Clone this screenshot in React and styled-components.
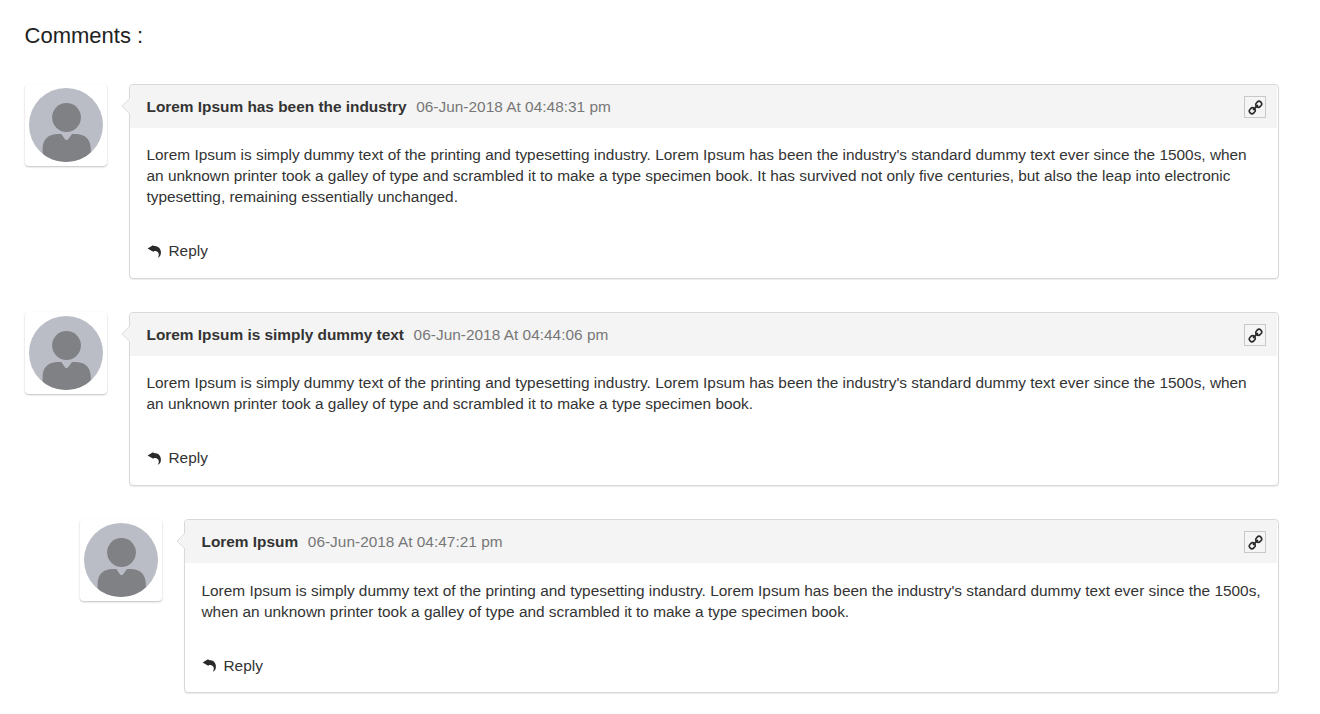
import React from "react";
import styled, { createGlobalStyle } from "styled-components";

const GlobalStyle = createGlobalStyle`
  *, *::before, *::after { box-sizing: border-box; }
  body {
    margin: 0;
    background: #fff;
    color: #333;
    font: 15.4px/21px "Liberation Sans", Arial, sans-serif;
  }
`;

const Page = styled.main`
  padding: 20px 41px 0 24.6px;
`;

const Heading = styled.h2`
  margin: 0 0 33px;
  font-size: 22px;
  line-height: 31px;
  font-weight: 400;
  color: #222;
`;

const CommentRow = styled.article`
  display: flex;
  align-items: flex-start;
  gap: 22px;
  margin-bottom: 33.15px;
  padding-left: ${({ $nested }) => ($nested ? "55.4px" : "0.4px")};
`;

const AvatarFrame = styled.div`
  flex: none;
  width: 82px;
  height: 82px;
  padding: 4px;
  border-radius: 4px;
  background: #fff;
  box-shadow: 0 1px 2px rgba(0, 0, 0, 0.25);

  svg { display: block; }
`;

const Card = styled.section`
  flex: 1;
  min-width: 0;
  border: 1px solid #d8d8d8;
  border-radius: 4px;
  background: #fff;
  box-shadow: 0 1px 1px rgba(0, 0, 0, 0.08);
`;

const CardHeader = styled.header`
  position: relative;
  display: flex;
  align-items: center;
  height: 43px;
  margin-right: 1px;
  padding: 0 11px 0 16.5px;
  border-radius: 3px 3px 0 0;
  background: #f4f4f4;
`;

const Pointer = styled.svg`
  position: absolute;
  left: -9px;
  top: 13px;
`;

const Title = styled.strong`
  margin-right: 9.7px;
`;

const Timestamp = styled.time`
  color: #777;
  letter-spacing: 0.02px;
`;

const LinkButton = styled.button`
  display: grid;
  place-items: center;
  width: 22px;
  height: 22px;
  margin: 1px 0 0 auto;
  padding: 0;
  border: 1px solid #c8c8c8;
  background: #f5f5f5;
`;

const CardBody = styled.div`
  padding: 16.25px 16.5px 16.75px;
`;

const Message = styled.p`
  margin: 0 0 33px;
`;

const ReplyButton = styled.button`
  display: flex;
  align-items: center;
  gap: 6px;
  padding: 0 0 0 1px;
  border: 0;
  background: none;
  color: #333;
  font: inherit;
`;

const Avatar = ({ id }) => (
  <AvatarFrame>
    <svg width="74" height="74" viewBox="0 0 74 74" aria-hidden="true">
      <clipPath id={id}><circle cx="37" cy="37" r="37" /></clipPath>
      <g clipPath={`url(#${id})`}>
        <rect width="74" height="74" fill="#babdc5" />
        <g fill="#808185">
          <circle cx="37.5" cy="29.5" r="14.4" />
          <path d="M13.6 74V61C13.6 51 19.8 46 29 46H32.3L36.1 51.4Q37.5 52.8 38.9 51.4L43 46H46.5C55.5 46 61.8 51 61.8 61V74Z" />
        </g>
      </g>
    </svg>
  </AvatarFrame>
);

const LinkIcon = () => (
  <svg width="16" height="16" viewBox="0 0 16 16" fill="none" stroke="#2a2a2a" strokeWidth="1.6" aria-hidden="true">
    <g transform="translate(8.5 8.5) rotate(-45)">
      <rect x="-7.6" y="-2.6" width="6" height="5.2" rx="2.6" />
      <rect x="1.6" y="-2.6" width="6" height="5.2" rx="2.6" />
      <path d="M-2.6 0H2.6" strokeWidth="2" strokeLinecap="round" />
    </g>
  </svg>
);

const ReplyIcon = () => (
  <svg width="15" height="14" viewBox="0 0 15 14" fill="#2a2a2a" aria-hidden="true">
    <path d="M0.6 4.5L6.4 1V1.9C11.3 1.7 14.2 4.6 13.9 8.9C13.8 11.3 12.8 12.9 10.8 13.8C12.1 11.9 12.2 9.8 11 8.3C10 7.1 8.4 6.8 6.6 7V8.1Z" />
  </svg>
);

const comments = [
  {
    title: "Lorem Ipsum has been the industry",
    date: "06-Jun-2018 At 04:48:31 pm",
    text: "Lorem Ipsum is simply dummy text of the printing and typesetting industry. Lorem Ipsum has been the industry's standard dummy text ever since the 1500s, when an unknown printer took a galley of type and scrambled it to make a type specimen book. It has survived not only five centuries, but also the leap into electronic typesetting, remaining essentially unchanged.",
  },
  {
    title: "Lorem Ipsum is simply dummy text",
    date: "06-Jun-2018 At 04:44:06 pm",
    text: "Lorem Ipsum is simply dummy text of the printing and typesetting industry. Lorem Ipsum has been the industry's standard dummy text ever since the 1500s, when an unknown printer took a galley of type and scrambled it to make a type specimen book.",
  },
  {
    title: "Lorem Ipsum",
    date: "06-Jun-2018 At 04:47:21 pm",
    text: "Lorem Ipsum is simply dummy text of the printing and typesetting industry. Lorem Ipsum has been the industry's standard dummy text ever since the 1500s, when an unknown printer took a galley of type and scrambled it to make a type specimen book.",
    nested: true,
  },
];

export default function App() {
  return (
    <Page>
      <GlobalStyle />
      <Heading>Comments :</Heading>
      {comments.map((c, i) => (
        <CommentRow key={c.date} $nested={c.nested}>
          <Avatar id={`avatar-${i}`} />
          <Card>
            <CardHeader>
              <Pointer width="10" height="16" viewBox="0 0 10 16" aria-hidden="true">
                <path d="M10 0.5H8.5L1 8L8.5 15.5H10Z" fill="#f4f4f4" />
                <path d="M8.5 0.5L1 8L8.5 15.5" fill="none" stroke="#dcdcdc" />
              </Pointer>
              <Title>{c.title}</Title>
              <Timestamp>{c.date}</Timestamp>
              <LinkButton aria-label="Link to comment"><LinkIcon /></LinkButton>
            </CardHeader>
            <CardBody>
              <Message>{c.text}</Message>
              <ReplyButton><ReplyIcon />Reply</ReplyButton>
            </CardBody>
          </Card>
        </CommentRow>
      ))}
    </Page>
  );
}
